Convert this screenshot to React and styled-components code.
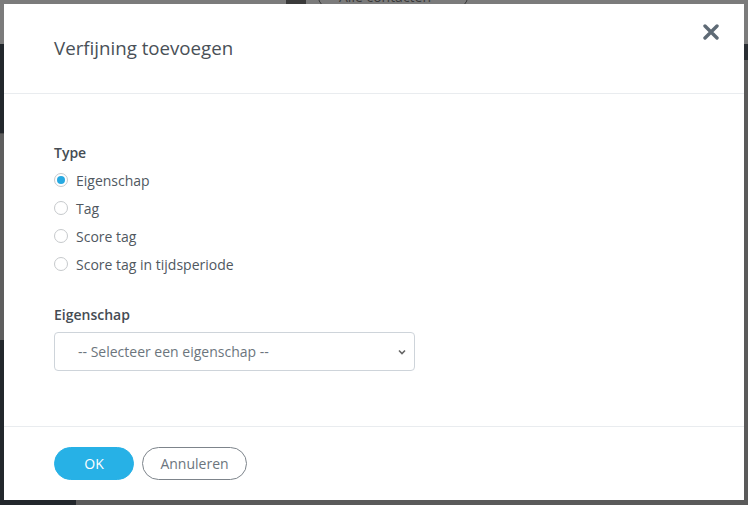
import React from "react";
import styled, { createGlobalStyle } from "styled-components";

const Global = createGlobalStyle`
  html, body { margin: 0; padding: 0; }
  body {
    font-family: "Open Sans", "Noto Sans", sans-serif;
    width: 748px; height: 505px; overflow: hidden;
    background: #5a5a5a;
  }
  * { box-sizing: border-box; }
`;

const Page = styled.div`
  width: 748px;
  height: 505px;
  display: flex;
  flex-direction: column;
  position: relative;
`;

const TopBar = styled.div`
  height: 44px;
  background: #7b7b7b;
  display: flex;
  align-items: flex-start;
  gap: 12px;
  padding-left: 286px;
`;

const GhostIcon = styled.div`
  width: 20px;
  height: 10px;
  margin-top: -2px;
  background: #3a3a3a;
  border-radius: 0 0 3px 3px;
`;

const GhostButton = styled.div`
  margin-top: -14px;
  height: 22px;
  width: 150px;
  border: 1px solid #3a3a3a;
  border-radius: 11px;
  color: #3a3a3a;
  font-size: 14px;
  padding-left: 20px;
  line-height: 20px;
`;

const Main = styled.div`
  flex: 1;
  display: flex;
`;

const Sidebar = styled.div`
  width: 76px;
  background: #22272c;
  display: flex;
  flex-direction: column;
  padding-top: 89px;
`;

const SideBlock = styled.div`
  height: 207px;
  background: #5e5e5e;
  border-top: 1px solid #4a4a4a;
`;

const Content = styled.div`
  flex: 1;
  background: #5a5a5a;
  border-top: 16px solid #2a2e33;
`;

const Modal = styled.div`
  position: absolute;
  left: 4px;
  top: 4px;
  width: 740px;
  height: 496px;
  background: #fff;
  display: flex;
  flex-direction: column;
`;

const Header = styled.div`
  height: 90px;
  border-bottom: 1px solid #e9ecef;
  display: flex;
  align-items: center;
  justify-content: space-between;
  padding: 0 0 2px 50px;
  position: relative;
`;

const Title = styled.h5`
  margin: 0;
  font-size: 18.7px;
  font-weight: 400;
  color: #495057;
  line-height: 27px;
`;

const Close = styled.button`
  position: absolute;
  right: 24px;
  top: 19px;
  width: 18px;
  height: 18px;
  border: 0;
  background: none;
  padding: 0;
  display: flex;
  align-items: center;
  justify-content: center;
`;

const Body = styled.div`
  flex: 1;
  padding: 48px 50px 0;
  border-bottom: 1px solid #e9ecef;
`;

const Group = styled.div`
  margin-bottom: ${(p) => p.$mb || 0}px;
`;

const Label = styled.div`
  font-size: 14px;
  font-weight: 600;
  color: #454c53;
  line-height: 21px;
  margin-bottom: ${(p) => p.$mb || 3}px;
`;

const RadioRow = styled.label`
  display: flex;
  align-items: center;
  height: 28px;
  gap: 8px;
  font-size: 14px;
  color: #50585f;
  cursor: pointer;
`;

const RadioCircle = styled.span`
  width: 14px;
  height: 14px;
  border-radius: 50%;
  border: 1px solid #c6c9cc;
  display: flex;
  align-items: center;
  justify-content: center;
  &::after {
    content: "";
    width: 8px;
    height: 8px;
    border-radius: 50%;
    background: ${(p) => (p.$checked ? "#27a9e1" : "transparent")};
  }
`;

const Select = styled.div`
  width: 361px;
  height: 39px;
  border: 1px solid #ced4da;
  border-radius: 4px;
  display: flex;
  align-items: center;
  justify-content: space-between;
  padding: 0 7px 0 23px;
  font-size: 14px;
  color: #6c757d;
`;

const Footer = styled.div`
  height: 73px;
  display: flex;
  align-items: center;
  gap: 8px;
  padding: 0 50px;
`;

const Button = styled.button`
  height: 33px;
  border-radius: 17px;
  font-family: inherit;
  font-size: 14px;
  padding: 0;
  width: ${(p) => p.$w}px;
  background: ${(p) => (p.$primary ? "#27b1e6" : "#fff")};
  color: ${(p) => (p.$primary ? "#fff" : "#6c757d")};
  border: 1px solid ${(p) => (p.$primary ? "#27b1e6" : "#7d848b")};
`;

const options = ["Eigenschap", "Tag", "Score tag", "Score tag in tijdsperiode"];

export default function App() {
  return (
    <>
      <Global />
      <Page>
        <TopBar>
          <GhostIcon />
          <GhostButton>Alle contacten</GhostButton>
        </TopBar>
        <Main>
          <Sidebar>
            <SideBlock />
          </Sidebar>
          <Content />
        </Main>
        <Modal>
          <Header>
            <Title>Verfijning toevoegen</Title>
            <Close aria-label="Sluiten">
              <svg width="16" height="16" viewBox="0 0 16 16">
                <path d="M2 2 L14 14 M14 2 L2 14" stroke="#5e6a75" strokeWidth="3.4" strokeLinecap="round" />
              </svg>
            </Close>
          </Header>
          <Body>
            <Group $mb={26}>
              <Label $mb={3}>Type</Label>
              {options.map((o, i) => (
                <RadioRow key={o}>
                  <RadioCircle $checked={i === 0} />
                  {o}
                </RadioRow>
              ))}
            </Group>
            <Group>
              <Label $mb={7}>Eigenschap</Label>
              <Select>
                <span>-- Selecteer een eigenschap --</span>
                <svg width="10" height="10" viewBox="0 0 10 10">
                  <path d="M2 3.5 L5 6.5 L8 3.5" fill="none" stroke="#666" strokeWidth="1.6" />
                </svg>
              </Select>
            </Group>
          </Body>
          <Footer>
            <Button $primary $w={80}>OK</Button>
            <Button $w={105}>Annuleren</Button>
          </Footer>
        </Modal>
      </Page>
    </>
  );
}
